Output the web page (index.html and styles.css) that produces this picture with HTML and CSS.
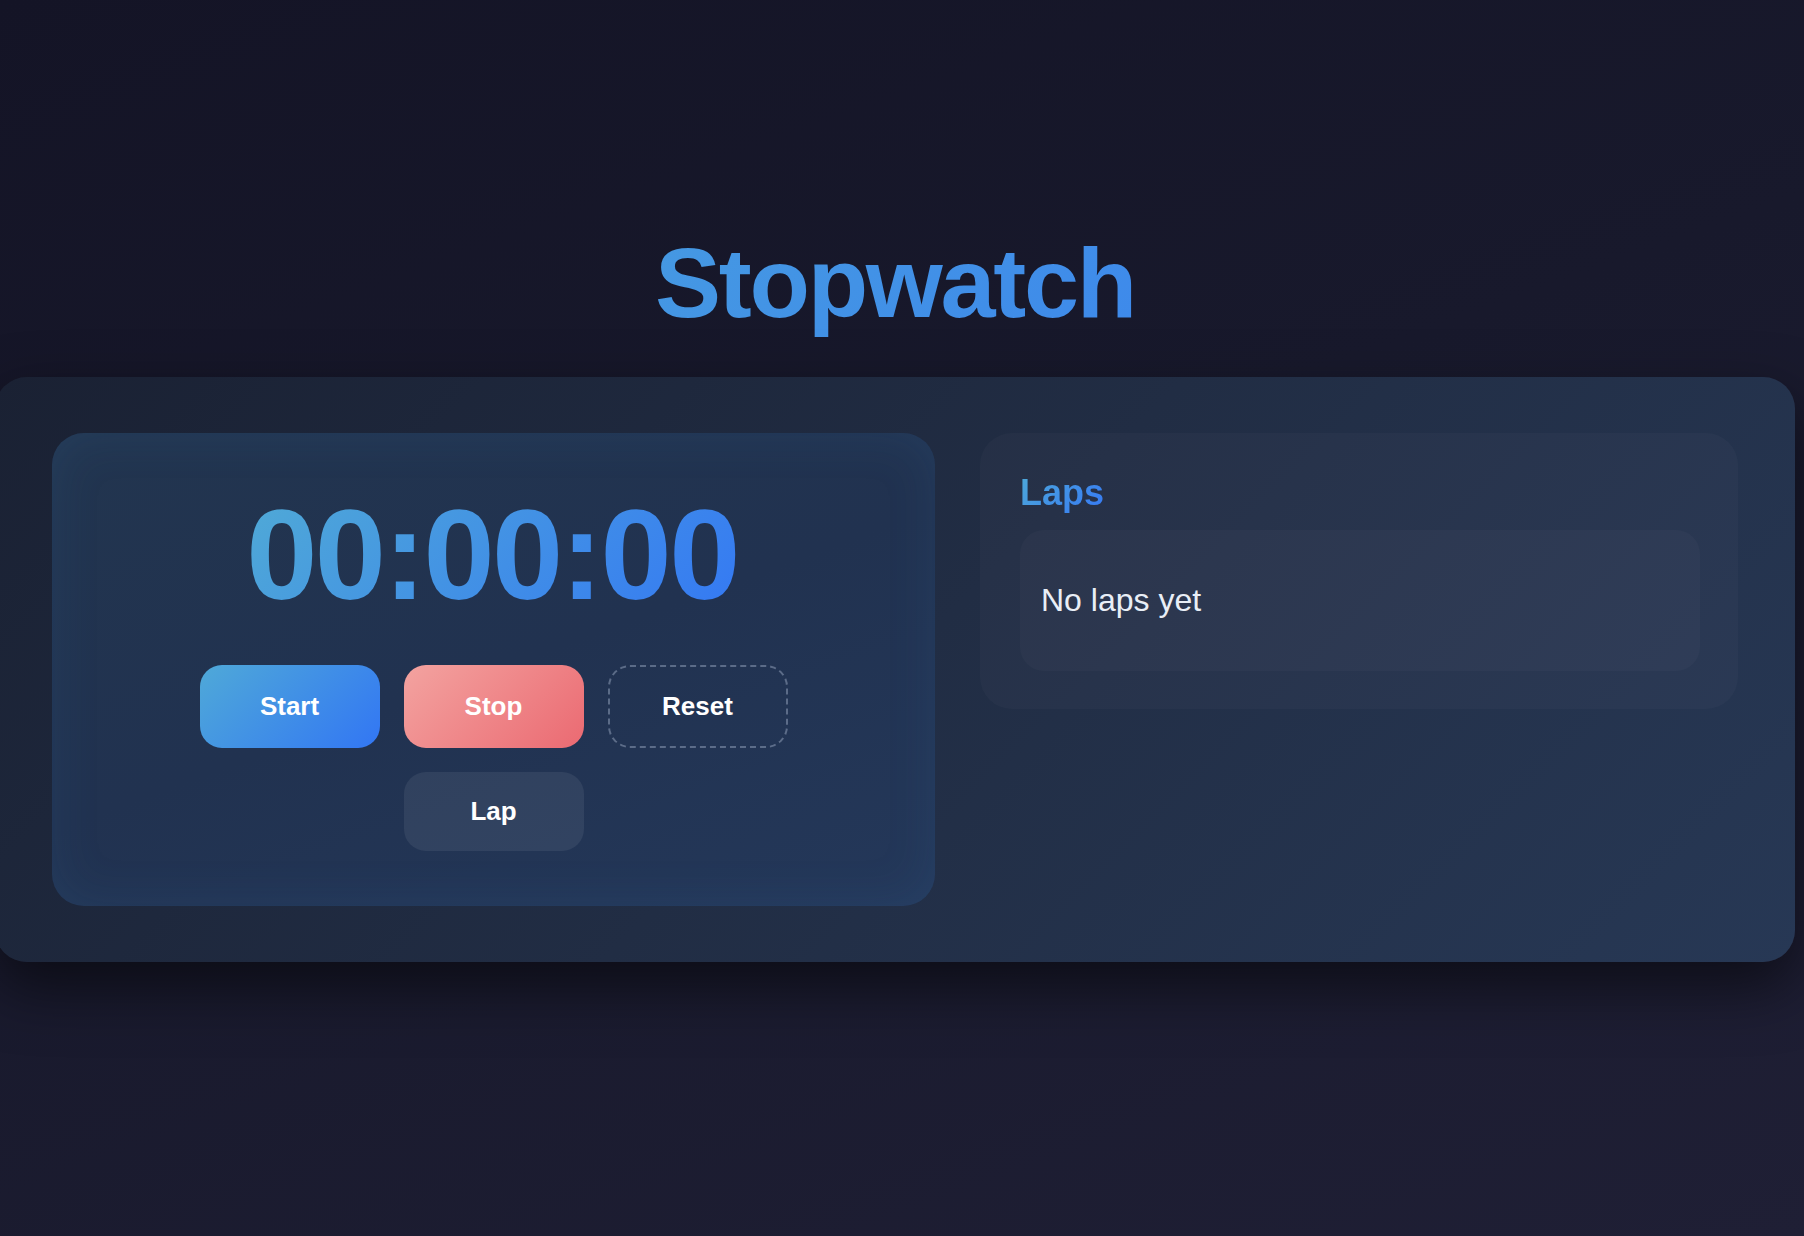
FILE: index.html
```html
<!DOCTYPE html>
<html lang="en">
<head>
<meta charset="utf-8">
<title>Stopwatch</title>
<link rel="stylesheet" href="styles.css">
</head>
<body>
<main class="app">
  <h1 class="title">Stopwatch</h1>
  <section class="card">
    <div class="timer-panel">
      <div class="display-row"><span class="display">00:00:00</span></div>
      <div class="controls">
        <button class="btn btn-start">Start</button>
        <button class="btn btn-stop">Stop</button>
        <button class="btn btn-reset">Reset</button>
        <button class="btn btn-lap">Lap</button>
      </div>
    </div>
    <div class="laps-panel">
      <h2 class="laps-title">Laps</h2>
      <div class="laps-list">No laps yet</div>
    </div>
  </section>
</main>
</body>
</html>
```
FILE: styles.css
```css
* { box-sizing: border-box; }
html, body { margin: 0; padding: 0; }
body {
  width: 1804px;
  height: 1236px;
  overflow: hidden;
  background: linear-gradient(160deg, #141426 0%, #18192c 45%, #1f1f35 100%);
  font-family: "Liberation Sans", Arial, Helvetica, sans-serif;
  color: #fff;
}
.app {
  width: 1800px;
  margin-left: -5px;
  padding-top: 226px;
}
.title {
  margin: 0 0 37px;
  font-size: 99px;
  line-height: 114px;
  font-weight: 700;
  letter-spacing: -2.3px;
  text-align: center;
  background: linear-gradient(135deg, #4eaad8 0%, #3578f5 100%);
  -webkit-background-clip: text;
  background-clip: text;
  color: transparent;
}
.card {
  display: grid;
  grid-template-columns: 883px 758px;
  column-gap: 45px;
  align-items: start;
  padding: 56px 57px 56px 57px;
  border-radius: 32px;
  background: linear-gradient(135deg, #1a2133 0%, #212d44 50%, #273855 100%);
  box-shadow: 0 24px 60px rgba(0, 0, 0, 0.55);
}
.timer-panel {
  padding: 58px 0 55px;
  border-radius: 32px;
  background: linear-gradient(160deg, #22354f 0%, #213250 50%, #24385a 100%);
  box-shadow: inset 0 0 50px rgba(60, 120, 175, 0.14);
  text-align: center;
}
.display-row { text-align: center; }
.display {
  display: inline-block;
  font-size: 128px;
  line-height: 128px;
  font-weight: 700;
  letter-spacing: -2.6px;
  padding-right: 3px;
  background: linear-gradient(135deg, #50aad6 0%, #3478f4 100%);
  -webkit-background-clip: text;
  background-clip: text;
  color: transparent;
}
.controls {
  display: flex;
  flex-wrap: wrap;
  justify-content: center;
  gap: 24px;
  width: 600px;
  margin: 46px auto 0;
}
.btn {
  width: 180px;
  padding: 24px 0;
  border: 2px solid transparent;
  border-radius: 22px;
  font-family: "Liberation Sans", Arial, Helvetica, sans-serif;
  font-size: 26px;
  line-height: 31px;
  font-weight: 700;
  color: #fff;
  text-align: center;
  cursor: pointer;
}
.btn-start {
  background: linear-gradient(135deg, #4fa9d8 0%, #3276f4 100%) border-box;
}
.btn-stop {
  background: linear-gradient(135deg, #f3a3a0 0%, #eb6a72 100%) border-box;
}
.btn-reset {
  background: transparent;
  border: 2px dashed rgba(140, 155, 180, 0.55);
}
.btn-lap {
  border: 0;
  background: rgba(255, 255, 255, 0.07);
}
.laps-panel {
  padding: 39px 38px 38px 40px;
  border-radius: 32px;
  background: rgba(255, 255, 255, 0.025);
}
.laps-title {
  display: inline-block;
  margin: 0 0 16px;
  font-size: 36px;
  line-height: 42px;
  font-weight: 700;
  background: linear-gradient(135deg, #4eaad8 0%, #3578f5 100%);
  -webkit-background-clip: text;
  background-clip: text;
  color: transparent;
}
.laps-list {
  padding: 52px 21px;
  border-radius: 24px;
  background: rgba(255, 255, 255, 0.025);
  font-size: 32px;
  line-height: 37px;
  color: #e9eef6;
}
```
